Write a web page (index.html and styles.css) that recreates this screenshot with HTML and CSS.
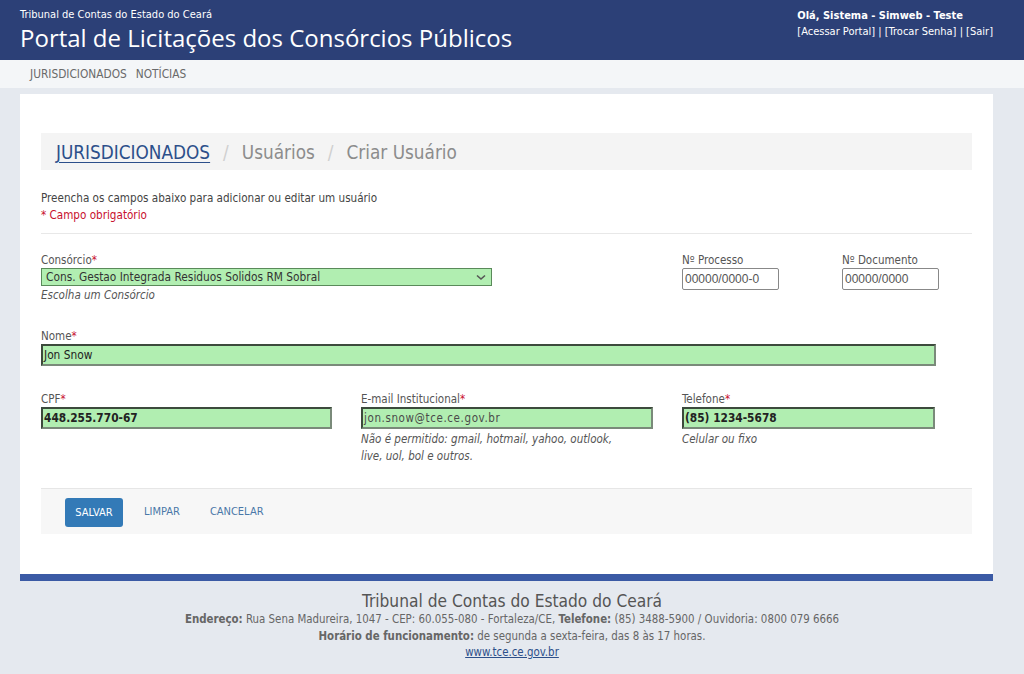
FILE: index.html
```html
<!DOCTYPE html>
<html lang="pt-BR">
<head>
<meta charset="utf-8">
<title>Portal de Licitações dos Consórcios Públicos</title>
<link rel="stylesheet" href="styles.css">
</head>
<body>
<header class="topbar">
  <div class="brand">
    <div class="org">Tribunal de Contas do Estado do Ceará</div>
    <div class="title">Portal de Licitações dos Consórcios Públicos</div>
  </div>
  <div class="user">
    <div class="hello">Olá, Sistema - Simweb - Teste</div>
    <div class="links"><a href="#">[Acessar Portal]</a> | <a href="#">[Trocar Senha]</a> | <a href="#">[Sair]</a></div>
  </div>
</header>
<nav class="menu">
  <a href="#">JURISDICIONADOS</a>
  <a href="#">NOTÍCIAS</a>
</nav>
<main class="card">
  <div class="crumbs">
    <a href="#" class="crumb-link">JURISDICIONADOS</a>
    <span class="sep">/</span>
    <span>Usuários</span>
    <span class="sep">/</span>
    <span>Criar Usuário</span>
  </div>
  <p class="intro">Preencha os campos abaixo para adicionar ou editar um usuário</p>
  <p class="required">* Campo obrigatório</p>
  <hr class="rule">
  <div class="row row-top">
    <div class="field f-cons">
      <label>Consórcio<span class="star">*</span></label>
      <div class="select">
        <span>Cons. Gestao Integrada Residuos Solidos RM Sobral</span>
        <svg width="10" height="7" viewBox="0 0 10 7"><path d="M1 1.5 L5 5 L9 1.5" fill="none" stroke="#555" stroke-width="1.6"/></svg>
      </div>
      <div class="help">Escolha um Consórcio</div>
    </div>
    <div class="field f-proc">
      <label>Nº Processo</label>
      <div class="input plain">00000/0000-0</div>
    </div>
    <div class="field f-doc">
      <label>Nº Documento</label>
      <div class="input plain">00000/0000</div>
    </div>
  </div>
  <div class="row row-name">
    <div class="field f-name">
      <label>Nome<span class="star">*</span></label>
      <div class="input ok">Jon Snow</div>
    </div>
  </div>
  <div class="row row-three">
    <div class="field f-cpf">
      <label>CPF<span class="star">*</span></label>
      <div class="input ok strong">448.255.770-67</div>
    </div>
    <div class="field f-mail">
      <label>E-mail Institucional<span class="star">*</span></label>
      <div class="input ok mail">jon.snow@tce.ce.gov.br</div>
      <div class="help">Não é permitido: gmail, hotmail, yahoo, outlook,<br>live, uol, bol e outros.</div>
    </div>
    <div class="field f-tel">
      <label>Telefone<span class="star">*</span></label>
      <div class="input ok strong">(85) 1234-5678</div>
      <div class="help">Celular ou fixo</div>
    </div>
  </div>
  <div class="actions">
    <button class="btn primary">SALVAR</button>
    <button class="btn link">LIMPAR</button>
    <button class="btn link">CANCELAR</button>
  </div>
</main>
<footer class="footer">
  <div class="f-title">Tribunal de Contas do Estado do Ceará</div>
  <div><b>Endereço:</b> Rua Sena Madureira, 1047 - CEP: 60.055-080 - Fortaleza/CE, <b>Telefone:</b> (85) 3488-5900 / Ouvidoria: 0800 079 6666</div>
  <div><b>Horário de funcionamento:</b> de segunda a sexta-feira, das 8 às 17 horas.</div>
  <div class="f-link"><a href="#">www.tce.ce.gov.br</a></div>
</footer>
</body>
</html>
```
FILE: styles.css
```css
* { box-sizing: border-box; }
html, body { margin: 0; padding: 0; }
body {
  background: #e5e9ef;
  font-family: "DejaVu Sans", "Open Sans", sans-serif;
  font-stretch: condensed;
  color: #444;
  font-size: 11px;
}
a { color: inherit; text-decoration: none; }

.topbar {
  height: 60px;
  background: #2c4077;
  color: #fff;
  display: flex;
  justify-content: space-between;
  padding: 8px 31px 0 20px;
}
.org { font-size: 11px; line-height: 14px; }
.title { font-family: "Open Sans", sans-serif; font-stretch: normal; font-size: 24px; line-height: 30px; margin-top: 1px; }
.user { font-size: 11px; line-height: 16px; }
.hello { font-weight: bold; }
.links a { color: #fff; }

.menu {
  height: 28px;
  background: #f4f6f8;
  display: flex;
  align-items: center;
  gap: 9px;
  padding-left: 30px;
  font-size: 11.8px;
}
.menu a { color: #6a6a6a; }

.card {
  background: #fff;
  margin: 6px 31px 0 20px;
  padding: 39px 21px 40px 21px;
  border-bottom: 7px solid #3b5aa5;
}
.crumbs {
  background: #f4f4f4;
  height: 37px;
  display: flex;
  align-items: center;
  padding-left: 15px;
  padding-top: 1px;
  font-size: 18.8px;
  color: #8c8c8c;
}
.crumb-link { color: #2c4f8a; text-decoration: underline; text-underline-offset: 3px; text-decoration-thickness: 1px; }
.sep { color: #cfcfcf; margin: 0 13px; }

.intro { margin: 20px 0 0 0; line-height: 16px; font-size: 11.6px; }
.required { margin: 1px 0 0 0; color: #c8102e; line-height: 17px; font-size: 11.6px; }
.rule { border: 0; border-top: 1px solid #e8e8e8; margin: 9px 0 0 0; }

.row { display: flex; }
.row-top { margin-top: 19px; }
.row-name { margin-top: 25px; }
.row-three { margin-top: 26px; }
.field label { display: block; font-size: 11.5px; line-height: 15px; color: #555; }
.star { color: #c8102e; }
.help { font-style: italic; color: #555; font-size: 11.5px; line-height: 17px; margin-top: 1px; }

.f-cons { width: 641px; }
.f-proc { width: 160px; }
.f-doc { width: 100px; }
.f-name { width: 895px; }
.f-cpf { width: 320px; }
.f-mail { width: 321px; }
.f-tel { width: 254px; }

.select {
  width: 451px;
  height: 18px;
  background: #b1eeb1;
  border: 1px solid #5a8a5a;
  display: flex;
  align-items: center;
  justify-content: space-between;
  padding: 0 5px 0 4px;
  font-size: 11.8px;
  color: #333;
}
.input {
  height: 22px;
  display: flex;
  align-items: center;
  padding-left: 2px;
  font-size: 11.8px;
}
.input.plain {
  width: 97px;
  border: 1px solid #888;
  border-radius: 2px;
  color: #555;
  font-family: "Liberation Sans", sans-serif;
  font-size: 12px;
}
.input.ok {
  background: #b1eeb1;
  border: 2px solid #3c4a3c;
  border-right-color: #7a8a7a;
  border-bottom-color: #7a8a7a;
  color: #222;
  padding-left: 1px;
}
.f-name .input.ok { width: 895px; }
.f-cpf .input.ok { width: 291px; }
.f-mail .input.ok { width: 292px; }
.f-tel .input.ok { width: 253px; }
.strong { font-weight: 600; color: #111; }
.input.mail { font-size: 11.5px; letter-spacing: 0.6px; color: #4a4a4a; }
.f-mail .help, .f-tel .help { margin-top: 2px; }

.actions {
  margin-top: 23px;
  background: #f7f7f7;
  border-top: 1px solid #e6e6e6;
  height: 46px;
  display: flex;
  align-items: center;
  padding-left: 24px;
}
.btn {
  font-family: "DejaVu Sans", sans-serif;
  font-stretch: condensed;
  font-size: 11px;
  border: 0;
  background: none;
  cursor: pointer;
}
.btn.primary {
  background: #337ab7;
  color: #fff;
  height: 29px;
  width: 58px;
  border-radius: 3px;
  padding: 0;
  margin-top: 2px;
}
.btn.link { color: #4a78a8; padding: 0; margin-left: 21px; }
.btn.link + .btn.link { margin-left: 30px; }

.footer {
  text-align: center;
  color: #666;
  font-size: 11.4px;
  line-height: 16.5px;
  padding-top: 10px;
}
.footer b { font-weight: 600; }
.f-title { font-size: 17.2px; line-height: 20px; color: #555; }
.f-link a { color: #2c4f8a; text-decoration: underline; }
```
